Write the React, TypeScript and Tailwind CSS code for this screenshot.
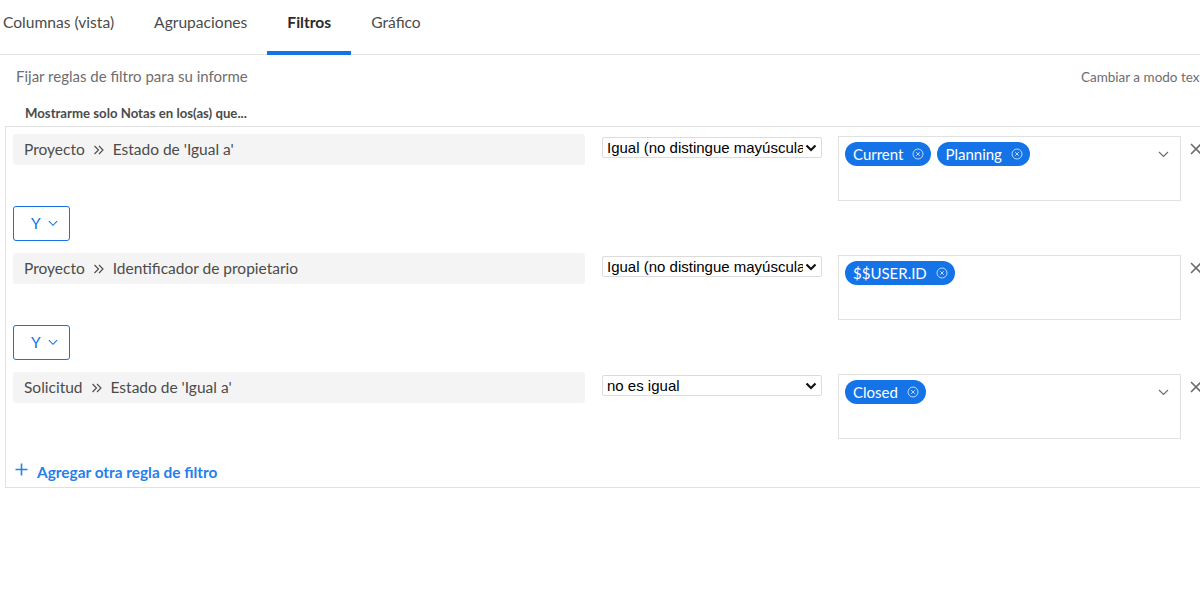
import React from "react";

const CircleX = () => (
  <svg width="12" height="12" viewBox="0 0 12 12" fill="none" className="opacity-80">
    <circle cx="6" cy="6" r="5" stroke="white" strokeWidth="0.9" />
    <path d="M4.2 4.2 L7.8 7.8 M7.8 4.2 L4.2 7.8" stroke="white" strokeWidth="0.9" />
  </svg>
);

const Pill = ({ label }: { label: string }) => (
  <div className="flex items-center h-[24px] rounded-full bg-[#1473e6] pl-[8px] pr-[7px] gap-[9px] text-white text-[15px]">
    <span>{label}</span>
    <CircleX />
  </div>
);

const ThinChevron = ({ color = "#6e6e6e", w = 11 }: { color?: string; w?: number }) => (
  <svg width={w} height="7" viewBox="0 0 11 7" fill="none">
    <path d="M1 1 L5.5 5.5 L10 1" stroke={color} strokeWidth="1.2" />
  </svg>
);

const CloseX = () => (
  <svg width="12" height="12" viewBox="0 0 12 12" fill="none">
    <path d="M1 1 L11 11 M11 1 L1 11" stroke="#6e6e6e" strokeWidth="1.6" />
  </svg>
);

const FakeSelect = ({ text }: { text: string }) => (
  <div className="flex items-center w-[220px] h-[21px] border border-[#dcdcdc] rounded-[2px] bg-white pl-[4px] pr-[4px] font-['Liberation_Sans',sans-serif] text-[15px] text-black">
    <span className="flex-1 overflow-hidden whitespace-nowrap leading-[19px]">{text}</span>
    <svg width="12" height="8" viewBox="0 0 12 8" className="ml-[2px] shrink-0">
      <path d="M1.5 1.5 L6 6 L10.5 1.5" stroke="#111" strokeWidth="2.2" fill="none" />
    </svg>
  </div>
);

const Row = ({
  a,
  b,
  op,
  pills,
  chevron,
}: {
  a: string;
  b: string;
  op: string;
  pills: string[];
  chevron: boolean;
}) => (
  <div className="flex items-start">
    <div className="w-[572px] h-[31px] rounded-[3px] bg-[#f4f4f4] flex items-center pl-[11px] text-[15.5px] text-[#4b4b4b]">
      <span>{a}</span>
      <svg width="12" height="10" viewBox="0 0 12 10" fill="none" className="mx-[8px]">
        <path d="M1.5 1 L5.5 5 L1.5 9 M6 1 L10 5 L6 9" stroke="#4b4b4b" strokeWidth="1.1" />
      </svg>
      <span>{b}</span>
    </div>
    <div className="ml-[17px] mt-[3px]">
      <FakeSelect text={op} />
    </div>
    <div className="ml-[16px] mt-[2px] w-[343px] h-[65px] border border-[#e1e1e1] flex items-start pl-[6px] pt-[5px] pr-[11px]">
      <div className="flex gap-[6px] flex-1">
        {pills.map((p) => (
          <Pill key={p} label={p} />
        ))}
      </div>
      {chevron && (
        <div className="mt-[9px]">
          <ThinChevron />
        </div>
      )}
    </div>
    <div className="ml-[9px] mt-[9px]">
      <CloseX />
    </div>
  </div>
);

const YButton = () => (
  <div className="mt-[5px] mb-[12px] w-[57px] h-[35px] border border-[#1473e6] rounded-[3px] flex items-center pl-[17px] gap-[7px] text-[#1473e6] text-[15.5px]">
    <span>Y</span>
    <ThinChevron color="#1473e6" w={10} />
  </div>
);

export default function App() {
  const tabs = ["Columnas (vista)", "Agrupaciones", "Filtros", "Gráfico"];
  return (
    <div className="w-[1200px] h-[601px] overflow-hidden bg-white font-['Lato',sans-serif]">
      <div className="w-[1222px]">
        <div className="h-[55px] border-b border-[#e5e5e5] flex">
          <div className="flex -ml-[17px]">
            {tabs.map((t) => {
              const active = t === "Filtros";
              return (
                <div
                  key={t}
                  className={
                    "relative px-[20px] pt-[12px] leading-[20px] text-[15.6px] " +
                    (active ? "font-bold text-[#2c2c2c]" : "text-[#4b4b4b]")
                  }
                >
                  {t}
                  {active && <div className="absolute left-0 right-0 bottom-[-1px] h-[4px] bg-[#1473e6]" />}
                </div>
              );
            })}
          </div>
        </div>
        <div className="h-[42px] flex justify-between items-center pl-[16px] pr-[10px]">
          <span className="text-[15px] leading-[20px] text-[#6e6e6e]">Fijar reglas de filtro para su informe</span>
          <span className="text-[13.5px] leading-[18px] text-[#6e6e6e] mt-[2px]">Cambiar a modo texto</span>
        </div>
        <div className="h-[29px] pl-[25px] pt-[8px] leading-[16px] text-[13.2px] font-bold text-[#4b4b4b]">
          Mostrarme solo Notas en los(as) que...
        </div>
        <div className="ml-[5px] border border-[#e1e1e1] pl-[7px] pt-[7px] pb-[5px]">
          <Row a="Proyecto" b="Estado de 'Igual a'" op="Igual (no distingue mayúsculas)" pills={["Current", "Planning"]} chevron />
          <YButton />
          <Row a="Proyecto" b="Identificador de propietario" op="Igual (no distingue mayúsculas)" pills={["$$USER.ID"]} chevron={false} />
          <YButton />
          <Row a="Solicitud" b="Estado de 'Igual a'" op="no es igual" pills={["Closed"]} chevron />
          <div className="flex items-center h-[20px] mt-[23px] ml-[2px] gap-[9px] text-[#2680eb] font-bold text-[15.4px] leading-[20px]">
            <svg width="13" height="13" viewBox="0 0 13 13" fill="none" className="mb-[6px]">
              <path d="M6.5 0.5 V12.5 M0.5 6.5 H12.5" stroke="#2680eb" strokeWidth="1.6" />
            </svg>
            <span>Agregar otra regla de filtro</span>
          </div>
        </div>
      </div>
    </div>
  );
}
